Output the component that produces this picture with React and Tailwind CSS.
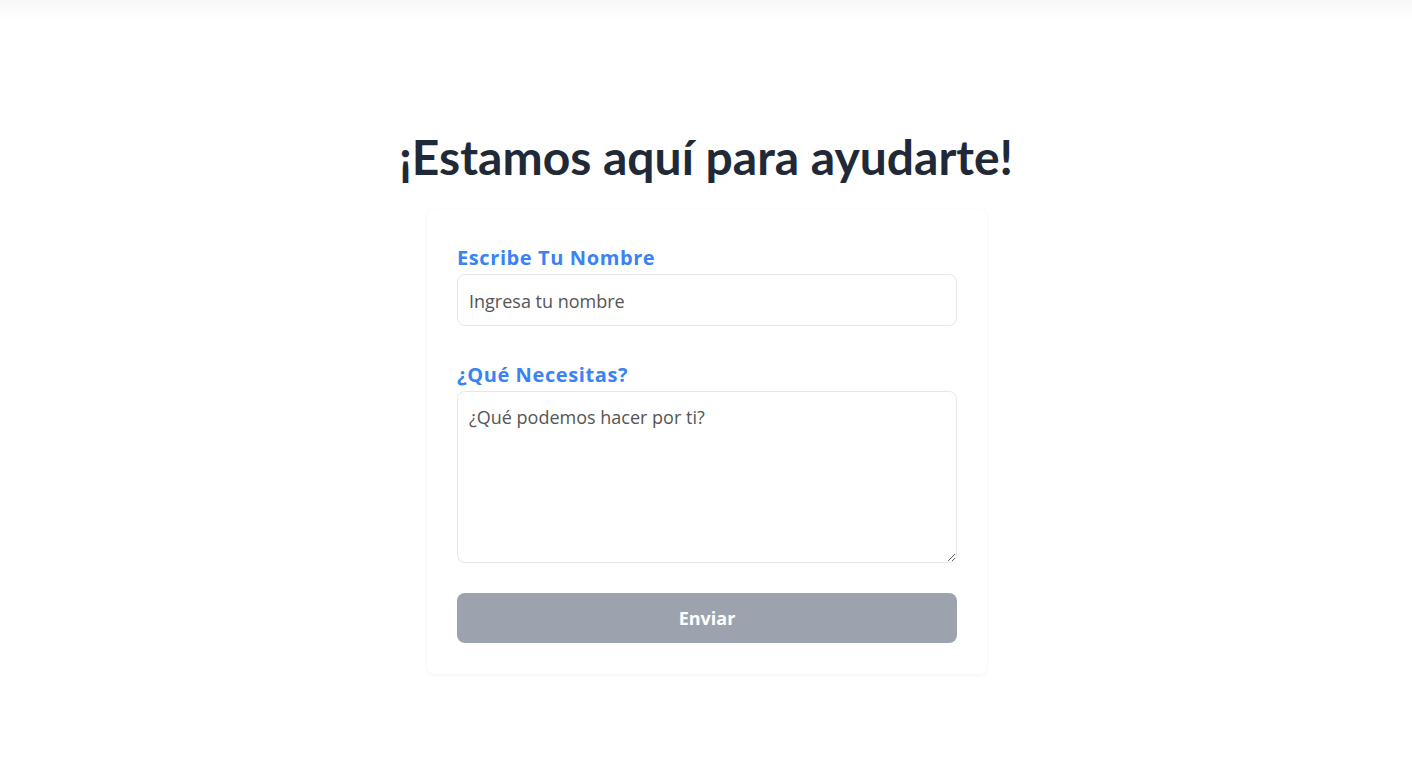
export default function App() {
  return (
    <div
      className="min-h-screen bg-white text-gray-800"
      style={{ fontFamily: '"Open Sans", Lato, sans-serif' }}
    >
      {/* top bar shadow */}
      <div className="h-5 bg-gradient-to-b from-[#f7f7f7] to-white" />

      <main className="flex flex-col items-center pt-[113px]">
        <h1
          className="text-5xl leading-[48px] font-bold text-[#1f2937]"
          style={{ fontFamily: 'Lato, sans-serif' }}
        >
          ¡Estamos aquí para ayudarte!
        </h1>

        <form className="mt-7 ml-0.5 w-[560px] rounded-lg bg-white px-[30px] pt-[35px] pb-[31px] shadow-[0_1px_4px_rgba(0,0,0,0.06)]">
          <label className="block text-xl leading-7 font-bold text-[#3b82f6] mb-0.5 tracking-[0.6px]">
            Escribe Tu Nombre
          </label>
          <input
            type="text"
            placeholder="Ingresa tu nombre"
            className="block w-full rounded-lg border border-gray-200 px-[11px] pt-[12px] pb-[10px] text-lg leading-7 text-gray-700 placeholder:text-[#555] outline-none"
          />

          <label className="mt-[35px] block text-xl leading-7 font-bold text-[#3b82f6] mb-0.5 tracking-[0.6px]">
            ¿Qué Necesitas?
          </label>
          <textarea
            placeholder="¿Qué podemos hacer por ti?"
            className="block h-[172px] w-full rounded-lg border border-gray-200 px-[11px] py-[11px] text-lg leading-7 text-gray-700 placeholder:text-[#555] outline-none"
          />

          <button
            type="button"
            disabled
            className="mt-[30px] block h-[50px] w-full rounded-lg bg-[#9ca3af] text-lg font-bold text-white"
          >
            Enviar
          </button>
        </form>
      </main>
    </div>
  );
}
